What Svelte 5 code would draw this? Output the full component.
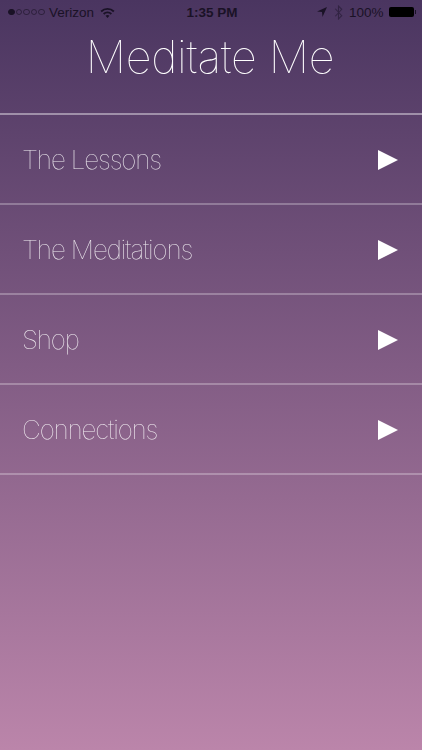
<script>
    const items = ['The Lessons', 'The Meditations', 'Shop', 'Connections'];
</script>

<style>
    :global(body) { margin: 0; font-family: "Inter", "Liberation Sans", sans-serif; }

    .screen { width: 422px; height: 750px; overflow: hidden; background: linear-gradient(#4a3560 0%, #bb85aa 100%); color: #fff; }

    .status { height: 24px; display: grid; grid-template-columns: 1fr auto 1fr; align-items: center; padding: 0 6px 0 8px; color: #1a1226; font-family: "Liberation Sans", sans-serif; font-size: 13.5px; }
    .left, .right { display: flex; align-items: center; }
    .right { justify-content: flex-end; }
    .dots { display: flex; gap: 1px; margin-right: 4px; }
    .dot { width: 6.6px; height: 6.6px; box-sizing: border-box; border: 1px solid #1a1226; border-radius: 50%; opacity: 0.6; }
    .dot.on { background: #1a1226; opacity: 1; }
    .wifi { margin-left: 6px; }
    .time { font-weight: 700; font-size: 13.5px; }
    .bt { margin: 0 6px 0 7px; opacity: 0.5; }
    .battery { display: flex; align-items: center; margin-left: 5px; }
    .battery i { display: block; width: 25px; height: 10px; background: #000; border-radius: 2px; }
    .battery b { display: block; width: 1.5px; height: 4px; background: #1a1226; margin-left: 1px; }

    h1 { margin: 0; height: 89px; box-sizing: border-box; padding: 7px 2px 0 0; text-align: center; font-size: 45px; line-height: 52px; font-weight: 100; letter-spacing: -0.3px; will-change: transform; }

    ul { margin: 0; padding: 0; list-style: none; border-top: 2px solid rgba(255, 255, 255, 0.42); }
    li { height: 86px; border-bottom: 2px solid rgba(255, 255, 255, 0.27); display: flex; align-items: center; justify-content: space-between; padding: 2px 24px 0 22px; font-size: 26px; font-weight: 100; letter-spacing: -1.15px; color: rgba(255, 255, 255, 0.88); }
    li span { margin-bottom: 2px; will-change: transform; }
    li svg { display: block; }
</style>

<div class="screen">
    <div class="status">
        <div class="left">
            <span class="dots">
                <span class="dot on"></span><span class="dot"></span><span class="dot"></span><span class="dot"></span><span class="dot"></span>
            </span>
            <span>Verizon</span>
            <svg class="wifi" width="15" height="11" viewBox="0 0 15 11">
                <path d="M0.5 3.8 A10 10 0 0 1 14.5 3.8 L13.2 5.2 A8 8 0 0 0 1.8 5.2 Z" fill="#1a1226"/>
                <path d="M3 6.3 A6.4 6.4 0 0 1 12 6.3 L10.7 7.7 A4.5 4.5 0 0 0 4.3 7.7 Z" fill="#1a1226"/>
                <path d="M5.5 8.8 A3 3 0 0 1 9.5 8.8 L7.5 11 Z" fill="#1a1226"/>
            </svg>
        </div>
        <div class="time">1:35 PM</div>
        <div class="right">
            <svg width="10" height="10" viewBox="0 0 10 10"><path d="M10 0 L0 4.5 L5 5 L5.5 10 Z" fill="#1a1226"/></svg>
            <svg class="bt" width="9" height="15" viewBox="0 0 8 14"><path d="M1 3.5 L7 10 L4 13 L4 1 L7 4 L1 10.5" fill="none" stroke="#1a1226" stroke-width="1"/></svg>
            <span>100%</span>
            <span class="battery"><i></i><b></b></span>
        </div>
    </div>

    <h1>Meditate Me</h1>

    <ul>
        {#each items as item}
            <li>
                <span>{item}</span>
                <svg width="20" height="20" viewBox="0 0 20 20"><path d="M0 0 L20 10 L0 20 Z" fill="#fff"/></svg>
            </li>
        {/each}
    </ul>
</div>
